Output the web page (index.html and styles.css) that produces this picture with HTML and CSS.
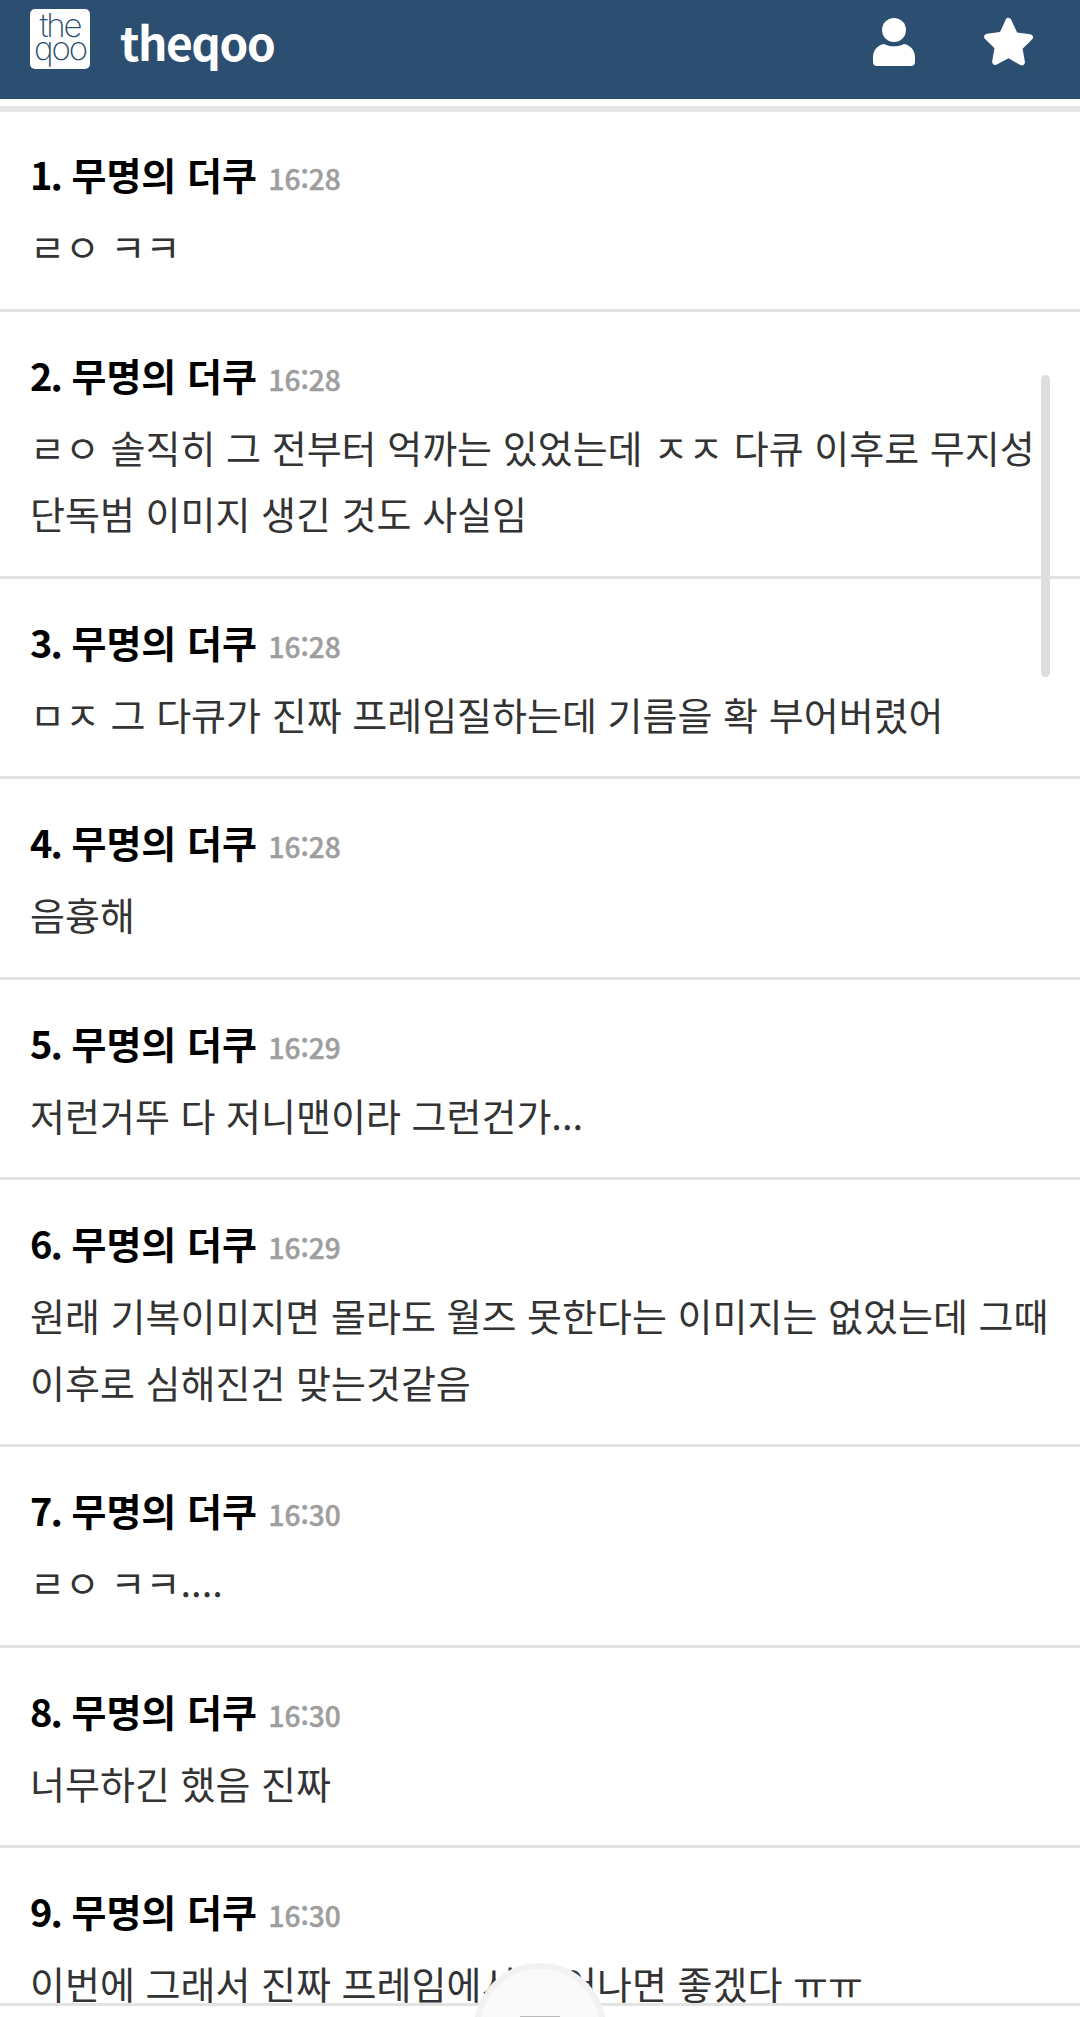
FILE: index.html
```html
<!DOCTYPE html>
<html lang="ko">
<head>
<meta charset="utf-8">
<title>theqoo</title>
<link rel="stylesheet" href="styles.css">
</head>
<body>
<header class="top">
  <div class="logo">the qoo</div>
  <div class="brand">theqoo</div>
  <svg class="ico user" viewBox="0 0 42 48"><circle cx="21" cy="12" r="12"/><path d="M11 26c3 1.500 6 2.300 10 2.300s7-.8 10-2.300c6 1 11 6 11 13v5c0 2.500-1.500 4-4 4H4c-2.500 0-4-1.500-4-4v-5c0-7 5-12 11-13z"/></svg>
  <svg class="ico star" viewBox="0 0 52 50"><path d="M26 1c1.500 0 2.500 1 3 2.200l5.800 12.500 13.200 1.800c3 .5 4 3.500 2 5.500l-9.600 9.300 2.300 13.200c.5 3-2.300 4.800-4.700 3.500L26 42l-11.900 6.500c-2.500 1.300-5.200-.5-4.700-3.500l2.300-13.200-9.600-9.300c-2-2-1-5 2-5.500l13.200-1.800 5.800-12.500c.5-1.200 1.500-2.200 3-2.200z"/></svg>
</header>
<div class="sep"></div>
<main class="list">
  <article class="row"><h2><span class="num">1.</span> 무명의 더쿠 <time>16:28</time></h2><p>ㄹㅇ ㅋㅋ</p></article>
  <article class="row"><h2><span class="num">2.</span> 무명의 더쿠 <time>16:28</time></h2><p>ㄹㅇ 솔직히 그 전부터 억까는 있었는데 ㅈㅈ 다큐 이후로 무지성 단독범 이미지 생긴 것도 사실임</p></article>
  <article class="row"><h2><span class="num">3.</span> 무명의 더쿠 <time>16:28</time></h2><p>ㅁㅈ 그 다큐가 진짜 프레임질하는데 기름을 확 부어버렸어</p></article>
  <article class="row"><h2><span class="num">4.</span> 무명의 더쿠 <time>16:28</time></h2><p>음흉해</p></article>
  <article class="row"><h2><span class="num">5.</span> 무명의 더쿠 <time>16:29</time></h2><p>저런거뚜 다 저니맨이라 그런건가...</p></article>
  <article class="row"><h2><span class="num">6.</span> 무명의 더쿠 <time>16:29</time></h2><p>원래 기복이미지면 몰라도 월즈 못한다는 이미지는 없었는데 그때 이후로 심해진건 맞는것같음</p></article>
  <article class="row"><h2><span class="num">7.</span> 무명의 더쿠 <time>16:30</time></h2><p>ㄹㅇ ㅋㅋ....</p></article>
  <article class="row"><h2><span class="num">8.</span> 무명의 더쿠 <time>16:30</time></h2><p>너무하긴 했음 진짜</p></article>
  <article class="row"><h2><span class="num">9.</span> 무명의 더쿠 <time>16:30</time></h2><p>이번에 그래서 진짜 프레임에서 벗어나면 좋겠다 ㅠㅠ</p></article>
</main>
<div class="scrollbar"></div>
<div class="bottom"></div>
<div class="fab"><i></i></div>
</body>
</html>
```
FILE: styles.css
```css
* { box-sizing: border-box; }
html, body { margin: 0; height: 2017px; overflow: hidden; background: #fff; }
body { position: relative; font-family: "Noto Sans CJK KR", "Noto Sans", sans-serif; color: #333; }
.top { height: 99px; background: #2c4e70; display: flex; align-items: flex-start; padding-left: 30px; }
.logo { width: 60px; height: 60px; margin-top: 9px; background: #fff; border-radius: 5px; color: #2c4e70; text-align: center; font: 200 33px/23px Inter, sans-serif; letter-spacing: -2px; padding-top: 5px; }
.brand { margin-left: 30px; margin-top: 7px; color: #fff; font-weight: 700; font-size: 46px; line-height: 68px; letter-spacing: -1.4px; }
.ico { fill: #fff; display: block; margin-top: 18px; }
.user { width: 42px; height: 48px; margin-left: auto; }
.star { width: 51px; height: 49px; margin-left: 68px; margin-right: 46px; margin-top: 17px; }
.sep { height: 13px; border-top: 7px solid #fff; background: #e6e6e6; }
.list { margin-top: -1px; }
.row { padding: 35px 30px 29px; border-bottom: 3px solid #e3e3e3; }
.row h2 { margin: 0; font-size: 38px; line-height: 56px; font-weight: 700; color: #000; }
.num { letter-spacing: -2px; }
.row time { margin-left: 1px; font-size: 28px; line-height: 1; font-weight: 500; color: #9e9e9e; -webkit-text-stroke: 0.5px #9e9e9e; }
.row p { margin: 11px 0 0; font-size: 38px; line-height: 66.5px; font-weight: 400; color: #333; }
.scrollbar { position: absolute; left: 1041px; top: 375px; width: 9px; height: 302px; border-radius: 5px; background: #dedee0; }
.bottom { position: absolute; left: 0; right: 0; bottom: 0; height: 14px; background: #fff; border-top: 3px solid #e3e3e3; }
.fab { position: absolute; left: 474px; top: 1963px; width: 132px; height: 132px; border-radius: 50%; background: #fafafa; border: 6px solid #f2f2f2; display: flex; justify-content: center; }
.fab i { display: block; width: 40px; height: 3px; margin-top: 47px; background: #bbb; }
```
